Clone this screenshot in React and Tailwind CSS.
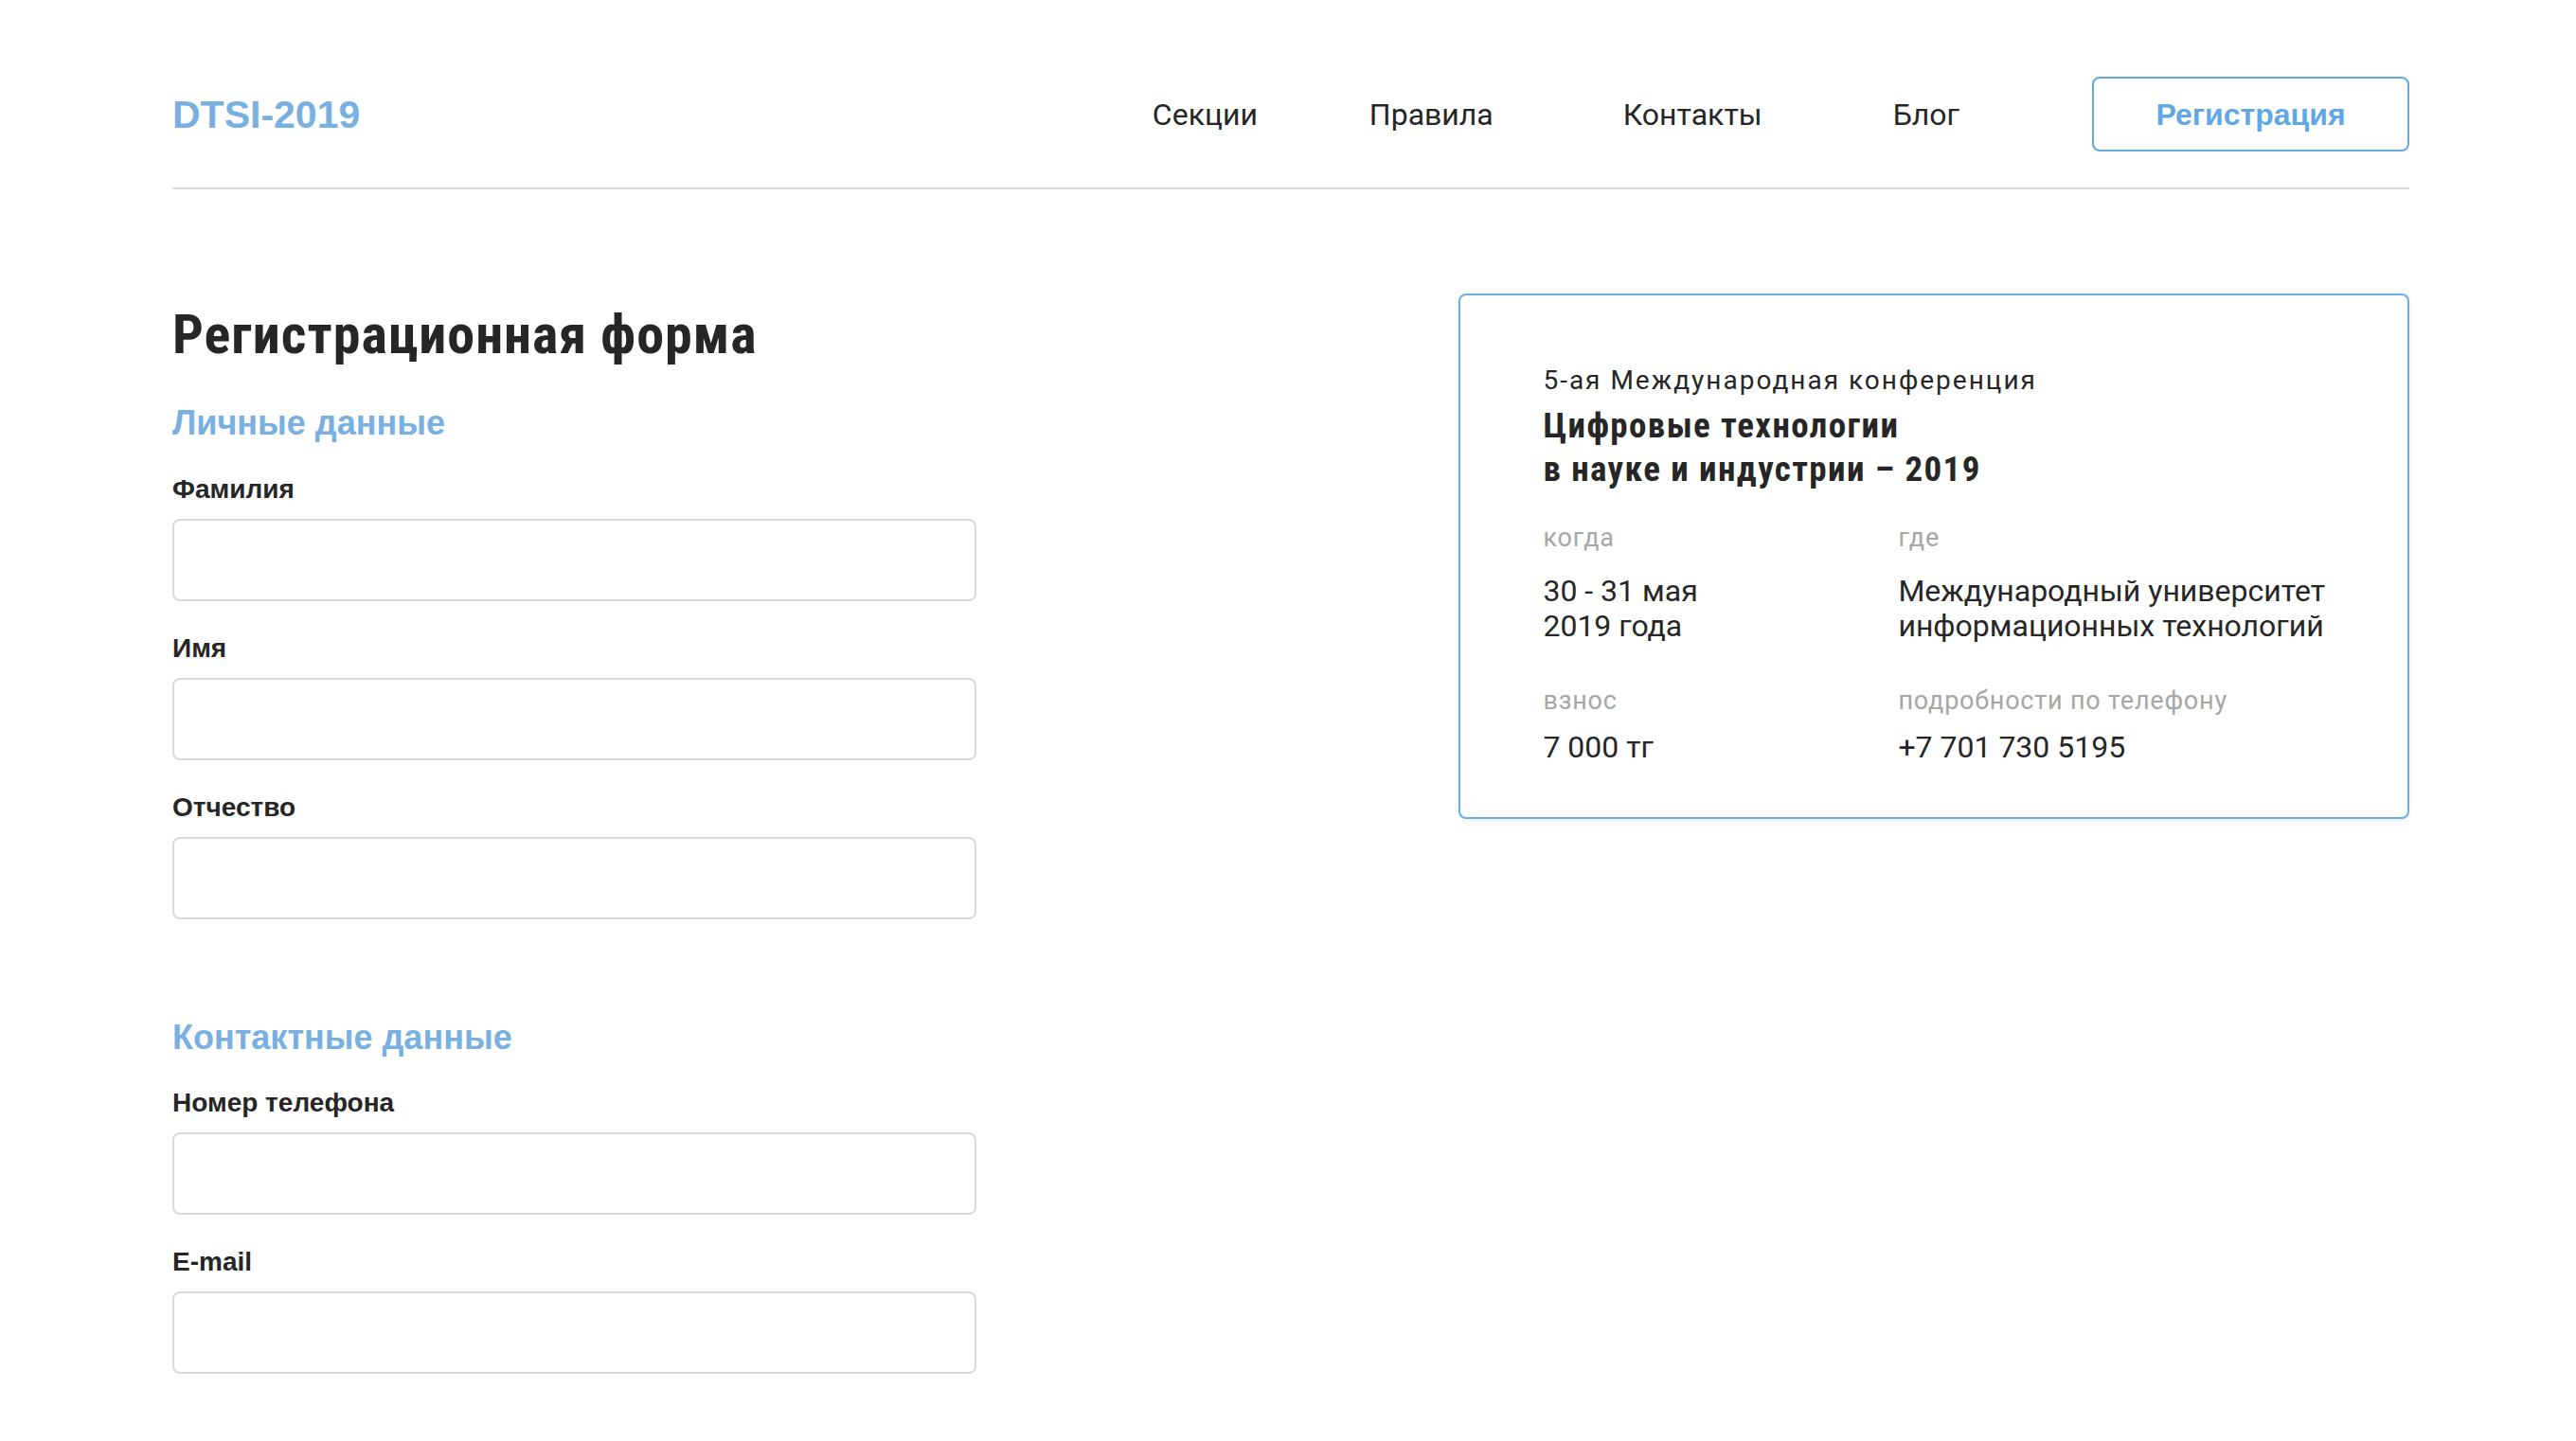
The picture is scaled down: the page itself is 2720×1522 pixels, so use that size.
import React from "react";

const H = "font-['Liberation_Sans',Arial,sans-serif]";
const R = "font-['Roboto',sans-serif]";

function Field({ label, first }) {
  return (
    <div>
      <div className={`${H} font-bold text-[28px] leading-[30px] text-[#262626] ${first ? "mt-[34.5px]" : "mt-[35px]"}`}>
        {label}
      </div>
      <input
        type="text"
        className="mt-[16px] block h-[87px] w-[849px] rounded-[8px] border-2 border-[#d9d9d9] bg-white outline-none"
      />
    </div>
  );
}

export default function App() {
  return (
    <div className="min-h-[1522px] bg-white text-[#262626]">
      <div className="ml-[182px] w-[2362px]">
        {/* Header */}
        <header className="flex h-[200px] items-start border-b-2 border-[#dadada] pt-[81px]">
          <div className="flex h-[79px] w-full items-center">
            <div className={`${H} font-bold text-[41px] leading-[42px] text-[#78b0e2]`}>DTSI-2019</div>
            <nav className={`${R} ml-auto flex items-center text-[32px] leading-[38px] text-[#262626]`}>
              <a className="mr-[118px]">Секции</a>
              <a className="mr-[137px]">Правила</a>
              <a className="mr-[138px]">Контакты</a>
              <a className="mr-[140px]">Блог</a>
            </nav>
            <button className={`${H} h-[79px] w-[335px] rounded-[8px] border-2 border-[#62a8e5] font-bold text-[32px] text-[#5fa7e6]`}>
              Регистрация
            </button>
          </div>
        </header>

        {/* Main */}
        <main className="mt-[110px] flex items-start">
          <section className="w-[1359px] pt-[14px]">
            <h1 className={`${R} [font-stretch:75%] font-bold text-[58px] leading-[58px] tracking-[1px] text-[#262626]`}>Регистрационная форма</h1>

            <h2 className={`${H} mt-[45px] font-bold text-[36px] leading-[40px] text-[#78b0e2]`}>Личные данные</h2>
            <Field label="Фамилия" first />
            <Field label="Имя" />
            <Field label="Отчество" />

            <h2 className={`${H} mt-[105px] font-bold text-[36px] leading-[40px] text-[#78b0e2]`}>Контактные данные</h2>
            <Field label="Номер телефона" first />
            <Field label="E-mail" />
          </section>

          <aside className="h-[555px] w-[1004px] rounded-[8px] border-2 border-[#6aaee6] pl-[87px] pt-[72px] shadow-[0_1px_3px_rgba(98,168,229,0.25)]">
            <div className={`${R} text-[28px] leading-[36px] tracking-[2px] text-[#262626]`}>5-ая Международная конференция</div>
            <div className={`${R} [font-stretch:75%] mt-[7px] font-bold text-[37px] leading-[46px] tracking-[1.4px] text-[#262626]`}>
              Цифровые технологии
              <br />в науке и индустрии – 2019
            </div>

            <div className={`${R} mt-[34px] grid grid-cols-[375px_1fr]`}>
              <div className="text-[27px] leading-[30px] tracking-[0.8px] text-[#a6a6a6]">когда</div>
              <div className="text-[27px] leading-[30px] tracking-[0.8px] text-[#a6a6a6]">где</div>
              <div className="mt-[22.5px] text-[32px] leading-[37px]">
                30 - 31 мая
                <br />
                2019 года
              </div>
              <div className="mt-[22.5px] text-[32px] leading-[37px]">
                Международный университет
                <br />
                информационных технологий
              </div>
              <div className="mt-[45.5px] text-[27px] leading-[30px] tracking-[0.8px] text-[#a6a6a6]">взнос</div>
              <div className="mt-[45.5px] text-[27px] leading-[30px] tracking-[0.8px] text-[#a6a6a6]">подробности по телефону</div>
              <div className="mt-[15.5px] text-[32px] leading-[37px]">7 000 тг</div>
              <div className="mt-[15.5px] text-[32px] leading-[37px]">+7 701 730 5195</div>
            </div>
          </aside>
        </main>
      </div>
    </div>
  );
}
